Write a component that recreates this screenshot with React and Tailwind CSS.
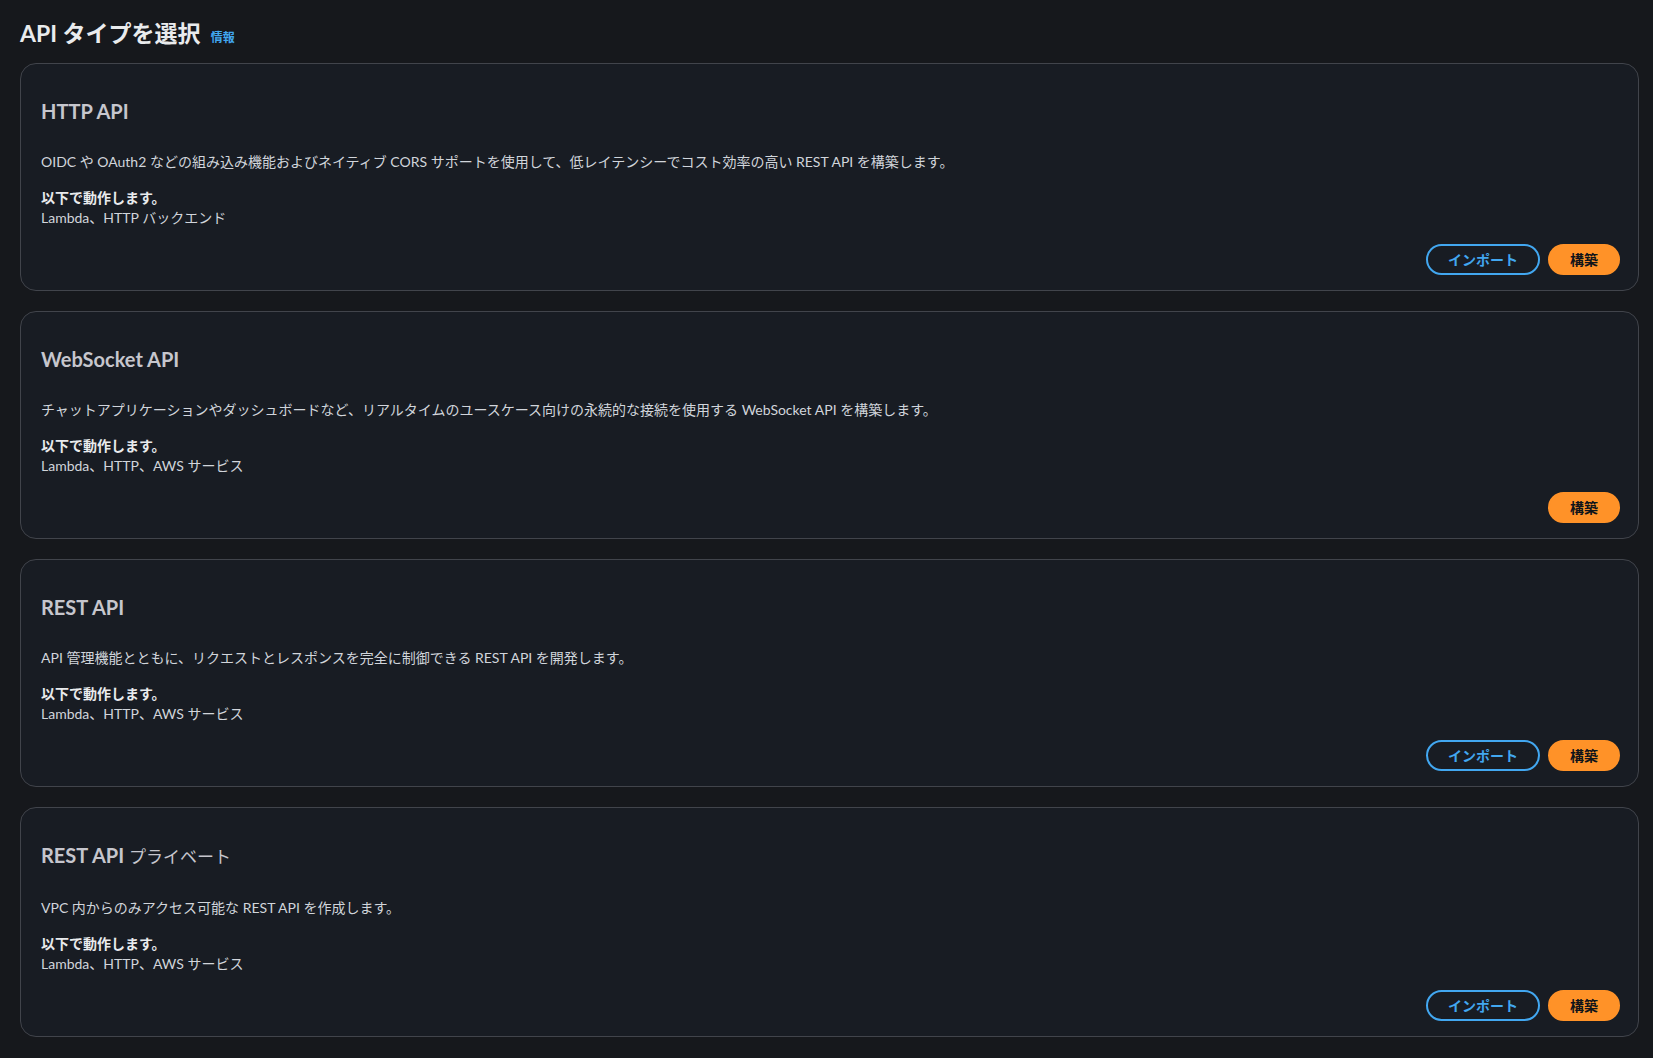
import React from "react";

const cards = [
  {
    title: <>HTTP API</>,
    desc: "OIDC や OAuth2 などの組み込み機能およびネイティブ CORS サポートを使用して、低レイテンシーでコスト効率の高い REST API を構築します。",
    works: "Lambda、HTTP バックエンド",
    importBtn: true,
  },
  {
    title: <>WebSocket API</>,
    desc: "チャットアプリケーションやダッシュボードなど、リアルタイムのユースケース向けの永続的な接続を使用する WebSocket API を構築します。",
    works: "Lambda、HTTP、AWS サービス",
    importBtn: false,
  },
  {
    title: <>REST API</>,
    desc: "API 管理機能とともに、リクエストとレスポンスを完全に制御できる REST API を開発します。",
    works: "Lambda、HTTP、AWS サービス",
    importBtn: true,
  },
  {
    title: (
      <>
        REST API <span className="text-[17px] font-normal">プライベート</span>
      </>
    ),
    desc: "VPC 内からのみアクセス可能な REST API を作成します。",
    works: "Lambda、HTTP、AWS サービス",
    importBtn: true,
  },
];

function Card({ c }) {
  return (
    <div className="rounded-2xl border border-[#41444b] bg-[#181c23] pl-[20px] pr-[18px] pt-[35px] pb-[15px]">
      <h2 className="text-[20px] leading-[24px] font-bold text-[#c6c6cd]">{c.title}</h2>
      <p className="mt-[29px] text-[14px] leading-[20px] text-[#d1d5db]">{c.desc}</p>
      <div className="mt-4 text-[14px] leading-[20px]">
        <div className="font-bold text-[#e9ebed]">以下で動作します。</div>
        <div className="text-[#d1d5db]">{c.works}</div>
      </div>
      <div className="mt-4 flex justify-end gap-2">
        {c.importBtn && (
          <button className="h-[31px] rounded-full border-2 border-[#42a7f0] px-[20px] text-[14px] font-bold leading-[27px] text-[#42a7f0]">
            インポート
          </button>
        )}
        <button className="h-[31px] rounded-full border-2 border-[#ff9228] bg-[#ff9228] px-[20px] text-[14px] font-bold leading-[27px] text-[#0f141a]">
          構築
        </button>
      </div>
    </div>
  );
}

export default function App() {
  return (
    <div
      className="min-h-[1058px] bg-[#16181c] pl-[20px] pr-[14px] pt-[19px] pb-[20px]"
      style={{ fontFamily: 'Lato, "Noto Sans CJK JP", sans-serif' }}
    >
      <div className="flex items-baseline gap-[10px]">
        <h1 className="text-[23px] leading-[28px] font-bold text-[#e9ebed]">API タイプを選択</h1>
        <a className="text-[12px] font-bold text-[#42a7f0]">情報</a>
      </div>
      <div className="mt-[16px] flex flex-col gap-[20px]">
        {cards.map((c, i) => (
          <Card key={i} c={c} />
        ))}
      </div>
    </div>
  );
}
